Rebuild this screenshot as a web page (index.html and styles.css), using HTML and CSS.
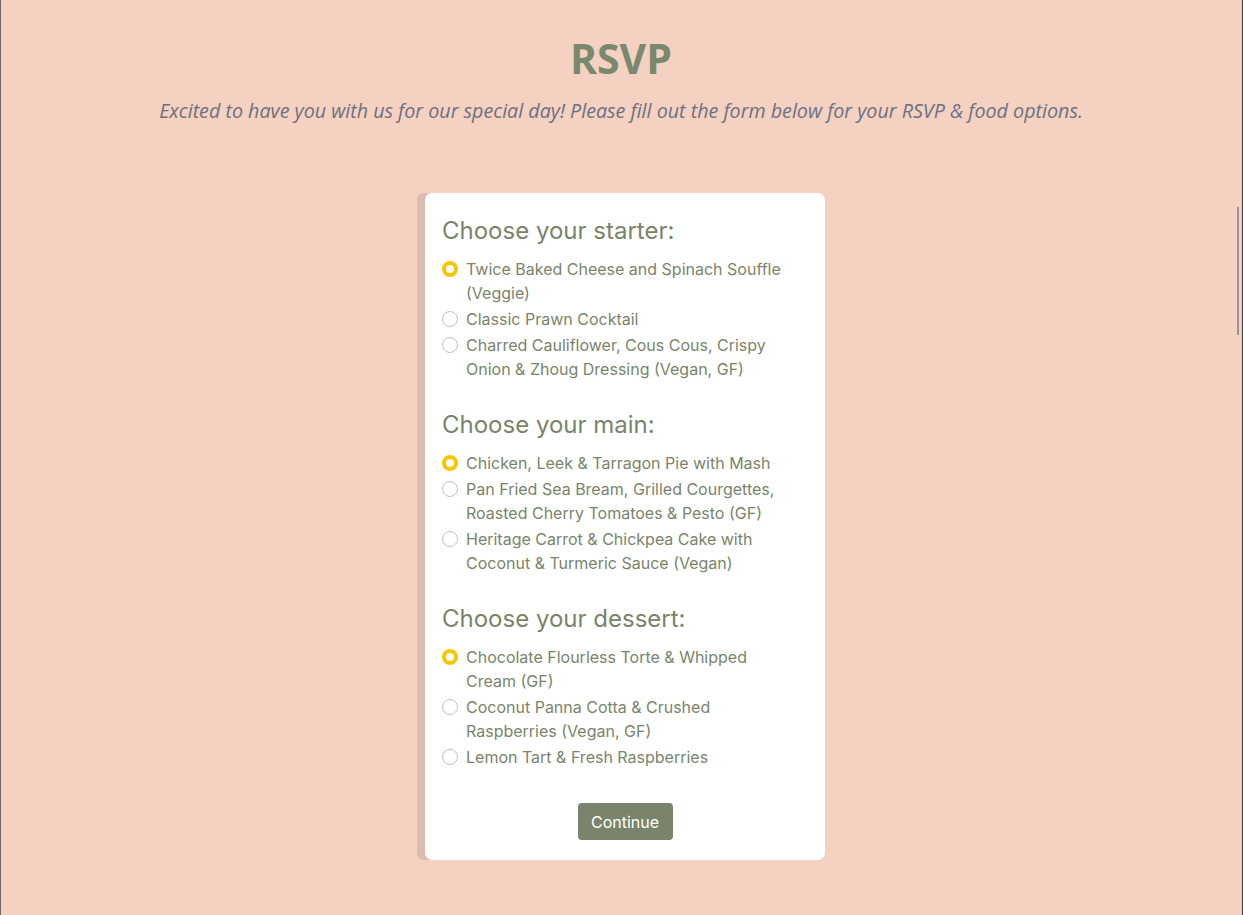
FILE: index.html
```
<!DOCTYPE html>
<html>
<head>
	<meta charset="utf-8">
	<title>RSVP</title>
	<link rel="stylesheet" href="styles.css">
</head>
<body>
	<!-- 页头 -->
	<div class="header">
		<h1>RSVP</h1>
		<p class="intro">Excited to have you with us for our special day! Please fill out the form below for your RSVP &amp; food options.</p>
	</div>
	<!-- 菜单表单 -->
	<div class="cardWrap">
		<form class="card">
			<div class="section">
				<h2>Choose your starter:</h2>
				<ul class="options">
					<li><label><input type="radio" name="starter" checked><span>Twice Baked Cheese and Spinach Souffle (Veggie)</span></label></li>
					<li><label><input type="radio" name="starter"><span>Classic Prawn Cocktail</span></label></li>
					<li><label><input type="radio" name="starter"><span>Charred Cauliflower, Cous Cous, Crispy Onion &amp; Zhoug Dressing (Vegan, GF)</span></label></li>
				</ul>
			</div>
			<div class="section">
				<h2>Choose your main:</h2>
				<ul class="options">
					<li><label><input type="radio" name="main" checked><span>Chicken, Leek &amp; Tarragon Pie with Mash</span></label></li>
					<li><label><input type="radio" name="main"><span>Pan Fried Sea Bream, Grilled Courgettes, Roasted Cherry Tomatoes &amp; Pesto (GF)</span></label></li>
					<li><label><input type="radio" name="main"><span>Heritage Carrot &amp; Chickpea Cake with Coconut &amp; Turmeric Sauce (Vegan)</span></label></li>
				</ul>
			</div>
			<div class="section">
				<h2>Choose your dessert:</h2>
				<ul class="options">
					<li><label><input type="radio" name="dessert" checked><span>Chocolate Flourless Torte &amp; Whipped Cream (GF)</span></label></li>
					<li><label><input type="radio" name="dessert"><span>Coconut Panna Cotta &amp; Crushed Raspberries (Vegan, GF)</span></label></li>
					<li><label><input type="radio" name="dessert"><span>Lemon Tart &amp; Fresh Raspberries</span></label></li>
				</ul>
			</div>
			<div class="actions">
				<button type="button" class="btn">Continue</button>
			</div>
		</form>
	</div>
	<div class="scroll"></div>
</body>
</html>
```
FILE: styles.css
```
*{margin: 0px;padding: 0px;box-sizing: border-box;}
ul{list-style: none;}
html{background: #f4d1c1;}
body{
	min-height: 915px;
	background: #f4d1c1;
	box-shadow: inset 1px 0 0 #6a6a70, inset -1px 0 0 #3a3a40;
	padding-top: 34px;
	padding-right: 1px;
}
.header{
	text-align: center;
}
.header h1{
	font-family: "Open Sans", "Liberation Sans", sans-serif;
	font-size: 41px;
	line-height: 48px;
	font-weight: 700;
	color: #7a896e;
}
.intro{
	margin-top: 16px;
	font-family: "Open Sans", "Liberation Sans", sans-serif;
	font-style: italic;
	font-size: 19.7px;
	line-height: 26px;
	color: #6c7080;
}
/* 左侧阴影条 */
.cardWrap{
	width: 408px;
	margin: 69px auto 0;
	padding-left: 8px;
	background: #dcbcae;
	border-radius: 7px;
}
.card{
	background: #fff;
	border-radius: 7px;
	padding: 23px 17px 20px;
	font-family: Inter, "Liberation Sans", sans-serif;
	color: #7a846c;
}
.section{
	margin-bottom: 29px;
}
.section h2{
	font-size: 24px;
	line-height: 30px;
	font-weight: 400;
	margin-bottom: 11px;
}
.options{
	padding-right: 17px;
}
.options li{
	margin-bottom: 2px;
}
.options li:last-child{
	margin-bottom: 0px;
}
.options label{
	display: flex;
	align-items: flex-start;
	gap: 8px;
	font-size: 16px;
	line-height: 24px;
	cursor: pointer;
}
.options input{
	appearance: none;
	-webkit-appearance: none;
	flex: none;
	width: 16px;
	height: 16px;
	margin-top: 4px;
	border: 1px solid #c2c2c2;
	border-radius: 50%;
	background: #fff;
}
.options input:checked{
	border: 4px solid #f7c600;
}
.actions{
	text-align: center;
	padding-top: 5px;
}
.btn{
	width: 95px;
	height: 37px;
	background: #7a846c;
	color: #fff;
	border: none;
	border-radius: 4px;
	font-family: Inter, "Liberation Sans", sans-serif;
	font-size: 16px;
	cursor: pointer;
}
.scroll{
	position: absolute;
	right: 4px;
	top: 207px;
	width: 2px;
	height: 128px;
	background: #9a9494;
}
```
